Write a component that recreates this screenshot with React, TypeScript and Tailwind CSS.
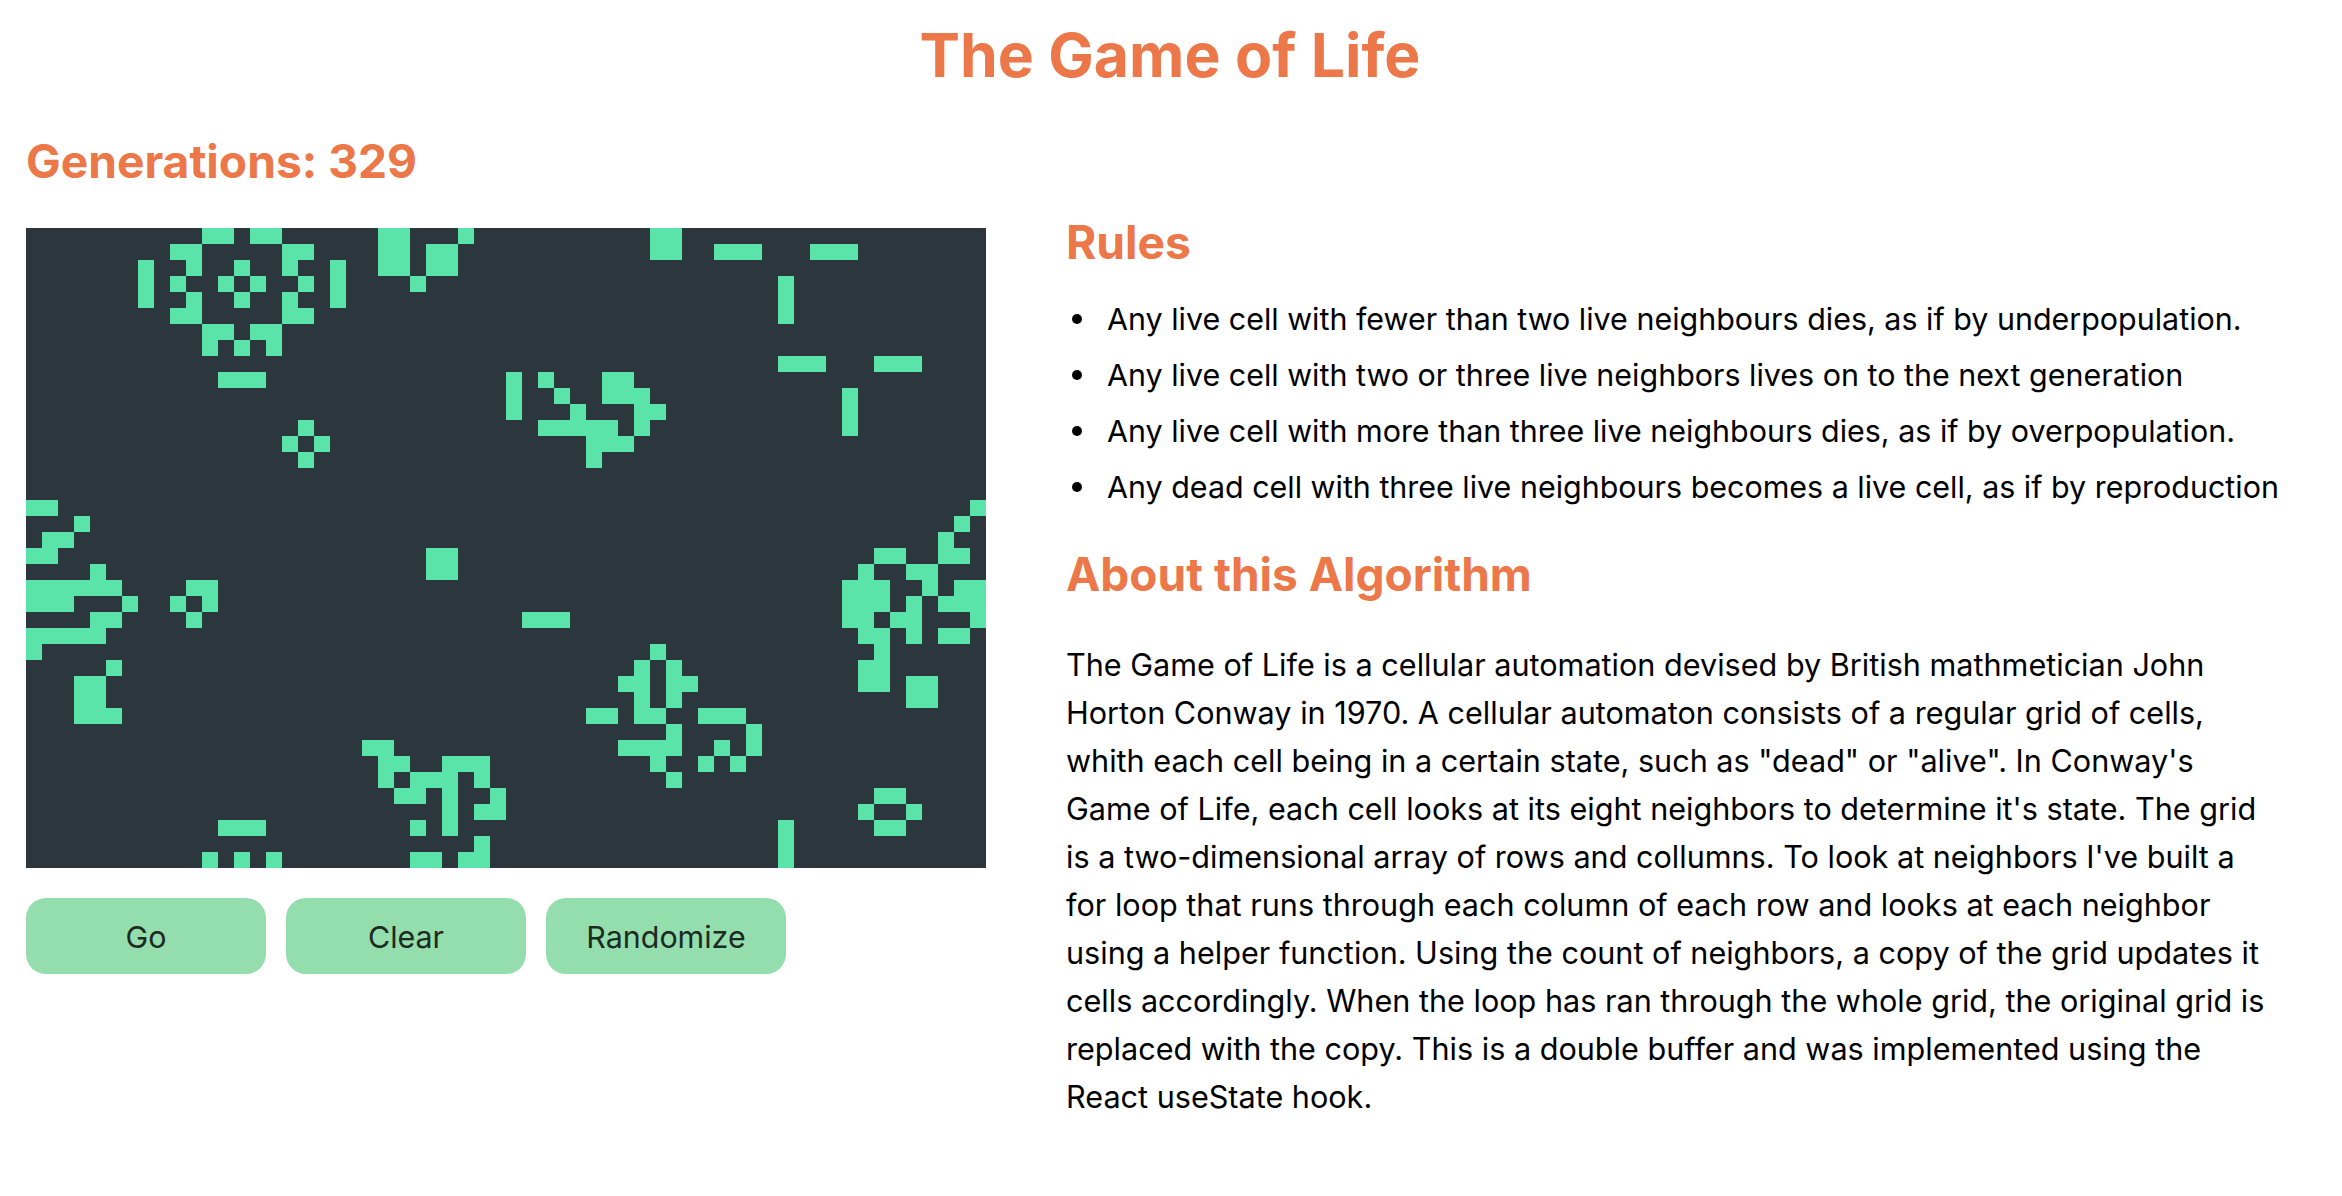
const LIVE: Record<number, number[]> = {
  0: [11, 12, 14, 15, 22, 23, 27, 39, 40],
  1: [9, 10, 16, 17, 22, 23, 25, 26, 39, 40, 43, 44, 45, 49, 50, 51],
  2: [7, 10, 13, 16, 19, 22, 23, 25, 26],
  3: [7, 9, 12, 14, 17, 19, 24, 47],
  4: [7, 10, 13, 16, 19, 47],
  5: [9, 10, 16, 17, 47],
  6: [11, 12, 14, 15],
  7: [11, 13, 15],
  8: [47, 48, 49, 53, 54, 55],
  9: [12, 13, 14, 30, 32, 36, 37],
  10: [30, 33, 36, 37, 38, 51],
  11: [30, 34, 38, 39, 51],
  12: [17, 32, 33, 34, 35, 36, 38, 51],
  13: [16, 18, 35, 36, 37],
  14: [17, 35],
  17: [0, 1, 59],
  18: [3, 58],
  19: [1, 2, 57],
  20: [0, 1, 25, 26, 53, 54, 57, 58],
  21: [4, 25, 26, 52, 55, 56],
  22: [0, 1, 2, 3, 4, 5, 10, 11, 51, 52, 53, 56, 58, 59],
  23: [0, 1, 2, 6, 9, 11, 51, 52, 53, 55, 57, 58, 59],
  24: [4, 5, 10, 31, 32, 33, 51, 52, 54, 55, 59],
  25: [0, 1, 2, 3, 4, 52, 53, 55, 57, 58],
  26: [0, 39, 53],
  27: [5, 38, 40, 52, 53],
  28: [3, 4, 37, 38, 40, 41, 52, 53, 55, 56],
  29: [3, 4, 38, 40, 55, 56],
  30: [3, 4, 5, 35, 36, 38, 39, 42, 43, 44],
  31: [40, 45],
  32: [21, 22, 37, 38, 39, 40, 43, 45],
  33: [22, 23, 26, 27, 28, 39, 42, 44],
  34: [22, 24, 25, 26, 28, 40],
  35: [23, 24, 26, 29, 53, 54],
  36: [26, 28, 29, 52, 55],
  37: [12, 13, 14, 24, 26, 47, 53, 54],
  38: [28, 47],
  39: [11, 13, 15, 24, 25, 27, 28, 47],
};

const RULES = [
  'Any live cell with fewer than two live neighbours dies, as if by underpopulation.',
  'Any live cell with two or three live neighbors lives on to the next generation',
  'Any live cell with more than three live neighbours dies, as if by overpopulation.',
  'Any dead cell with three live neighbours becomes a live cell, as if by reproduction',
];

const ABOUT = `The Game of Life is a cellular automation devised by British mathmetician John Horton Conway in 1970. A cellular automaton consists of a regular grid of cells, whith each cell being in a certain state, such as "dead" or "alive". In Conway's Game of Life, each cell looks at its eight neighbors to determine it's state. The grid is a two-dimensional array of rows and collumns. To look at neighbors I've built a for loop that runs through each column of each row and looks at each neighbor using a helper function. Using the count of neighbors, a copy of the grid updates it cells accordingly. When the loop has ran through the whole grid, the original grid is replaced with the copy. This is a double buffer and was implemented using the React useState hook.`;

function Board() {
  const cells = [];
  for (let r = 0; r < 40; r++) {
    for (let c = 0; c < 60; c++) {
      const alive = LIVE[r]?.includes(c);
      cells.push(<div key={`${r}-${c}`} className={alive ? 'bg-[#5ae4a9]' : 'bg-[#2c373d]'} />);
    }
  }
  return <div className="grid grid-cols-[repeat(60,16px)] grid-rows-[repeat(40,16px)] w-[960px] h-[640px]">{cells}</div>;
}

function Btn({ label }: { label: string }) {
  return (
    <button className="w-[240px] h-[76px] pt-[2px] rounded-[20px] bg-[#94deae] text-[30.4px] text-[#1d2a22] leading-none">
      {label}
    </button>
  );
}

export default function App() {
  return (
    <div className="min-h-[1196px] bg-white text-black font-['Inter',sans-serif]">
      <h1 className="pt-[19px] pr-[2px] text-center text-[60.7px] leading-[72px] font-bold text-[#ec7748]">The Game of Life</h1>
      <div className="flex px-[26px]">
        <div className="w-[960px] shrink-0">
          <h2 className="mt-[43px] mb-[40px] text-[46.2px] leading-[54px] font-bold text-[#ec7748]">Generations: 329</h2>
          <Board />
          <div className="flex gap-[20px] mt-[30px]">
            <Btn label="Go" />
            <Btn label="Clear" />
            <Btn label="Randomize" />
          </div>
        </div>
        <div className="ml-[80px] w-[1216px] mt-[124px]">
          <h3 className="text-[46.2px] leading-[54px] font-bold text-[#ec7748]">Rules</h3>
          <ul className="mt-[22px] text-[30.45px] leading-[56px]">
            {RULES.map((rule) => (
              <li key={rule} className="flex items-center whitespace-nowrap">
                <span className="w-[10px] h-[10px] ml-[6px] mr-[25px] rounded-full bg-black shrink-0" />
                {rule}
              </li>
            ))}
          </ul>
          <h3 className="mt-[32px] text-[46px] leading-[54px] font-bold text-[#ec7748]">About this Algorithm</h3>
          <p className="mt-[40px] text-[30.6px] leading-[48px]">{ABOUT}</p>
        </div>
      </div>
    </div>
  );
}
